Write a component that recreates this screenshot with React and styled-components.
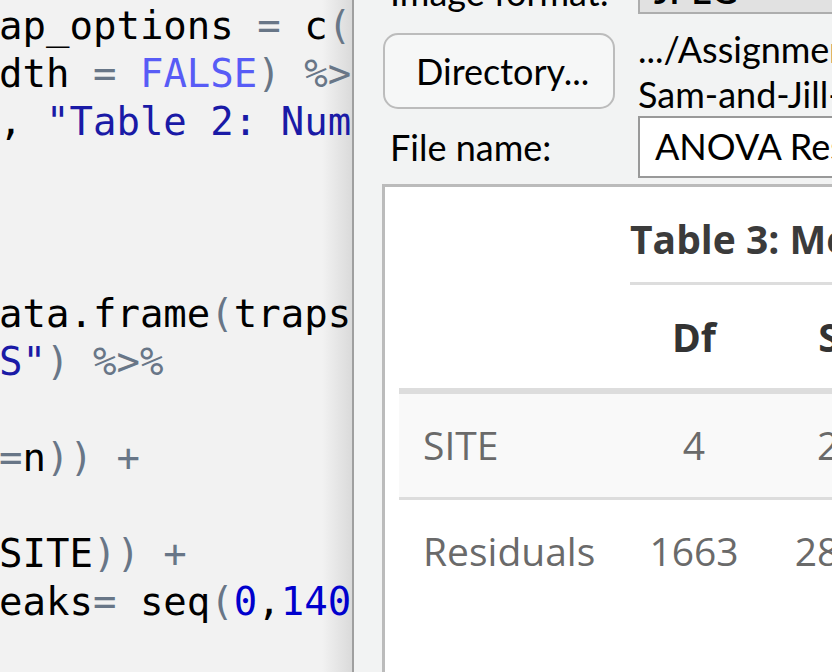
import React from "react";
import styled, { createGlobalStyle } from "styled-components";

const GlobalStyle = createGlobalStyle`
  html, body {
    margin: 0;
    padding: 0;
    width: 832px;
    height: 672px;
    overflow: hidden;
    background: #f2f3f3;
  }
`;

const tokenColors = {
  t: "#000000",
  op: "#687687",
  kw: "#585cf6",
  str: "#1a1aa6",
  num: "#0000cd",
};

const codeLines = [
  [["ap_options", "t"], [" = ", "op"], ["c", "t"], ["(", "op"]],
  [["dth", "t"], [" = ", "op"], ["FALSE", "kw"], [")", "op"], [" %>", "op"]],
  [[",", "t"], [' "Table 2: Num', "str"]],
  [],
  [],
  [],
  [["ata.frame", "t"], ["(", "op"], ["traps", "t"]],
  [['S"', "str"], [")", "op"], [" %>%", "op"]],
  [],
  [["=", "op"], ["n", "t"], ["))", "op"], [" +", "op"]],
  [],
  [["SITE", "t"], ["))", "op"], [" +", "op"]],
  [["eaks", "t"], ["=", "op"], [" seq", "t"], ["(", "op"], ["0", "num"], [",", "t"], ["140", "num"]],
  [],
];

const Screen = styled.div`
  display: flex;
  width: 832px;
  height: 672px;
  overflow: hidden;
`;

const Editor = styled.div`
  flex: none;
  width: 354px;
  height: 672px;
  box-sizing: border-box;
  padding-top: 2px;
  overflow: hidden;
  background: linear-gradient(to right, #f2f2f2 0, #f2f2f2 322px, #dadada 352px);
  border-right: 2px solid #9f9f9f;
  font-family: "DejaVu Sans Mono", "Liberation Mono", monospace;
  font-size: 39px;
  line-height: 48px;
  white-space: pre;
`;

const CodeLine = styled.div`
  height: 48px;
  margin-left: -1px;
`;

const Tok = styled.span`
  color: ${(p) => tokenColors[p.$k]};
`;

const Dialog = styled.div`
  flex: 1;
  min-width: 0;
  display: flex;
  flex-direction: column;
  background: #f2f3f3;
  padding-left: 28px;
  overflow: hidden;
  font-family: "Segoe UI", Lato, "Noto Sans", sans-serif;
  font-size: 36px;
  color: #000;
`;

const Form = styled.div`
  display: grid;
  grid-template-columns: 256px 320px;
  margin-top: -44px;
`;

const Label = styled.div`
  align-self: center;
  padding-left: 8px;
  padding-top: ${(p) => p.$drop || 0}px;
  white-space: nowrap;
`;

const Select = styled.div`
  height: 58px;
  box-sizing: border-box;
  border: 2px solid #adadad;
  background: #e1e1e1;
  padding: 7px 14px 0;
  line-height: 50px;
  font-weight: 600;
  overflow: hidden;
`;

const Button = styled.div`
  align-self: center;
  justify-self: start;
  margin: 12px 0 0 1px;
  width: 232px;
  height: 76px;
  box-sizing: border-box;
  border: 2px solid #bcbcbc;
  border-radius: 15px;
  background: #f6f7f7;
  display: flex;
  align-items: center;
  padding-left: 31px;
  white-space: nowrap;
`;

const PathText = styled.div`
  margin-top: 13px;
  margin-bottom: -1px;
  line-height: 45px;
  white-space: nowrap;
`;

const Input = styled.div`
  height: 62px;
  box-sizing: border-box;
  border: 2px solid #999;
  background: #fff;
  padding-left: 15px;
  line-height: 56px;
  white-space: nowrap;
`;

const Viewer = styled.div`
  flex: 1;
  margin-top: 6px;
  border-top: 3px solid #bbbbbb;
  border-left: 3px solid #bbbbbb;
  background: #fff;
  overflow: hidden;
  padding-left: 14px;
`;

const Table = styled.table`
  border-collapse: collapse;
  table-layout: fixed;
  width: 800px;
  font-family: "Open Sans", "Noto Sans", sans-serif;
  font-size: 39px;
  line-height: 1.42857;
  color: #6a6a6a;
`;

const Col = styled.col`
  width: ${(p) => p.$w}px;
`;

const GroupCell = styled.th`
  padding: 24px 9px 0 9px;
  text-align: left;
  font-weight: 700;
  color: #3b3b3b;
  white-space: nowrap;
`;

const GroupTitle = styled.div`
  border-bottom: 3px solid #dddddd;
  padding-bottom: 15px;
`;

const HeadCell = styled.th`
  padding: 24px 24px 24px;
  text-align: ${(p) => (p.$left ? "left" : "center")};
  font-weight: 700;
  color: #333;
  border-bottom: 6px solid #dddddd;
  white-space: nowrap;
`;

const Row = styled.tr`
  background: ${(p) => (p.$striped ? "#f9f9f9" : "#fff")};
  border-top: ${(p) => (p.$first ? "none" : "3px solid #dddddd")};
`;

const Cell = styled.td`
  padding: 23px 24px 24px;
  text-align: ${(p) => (p.$left ? "left" : "center")};
  white-space: nowrap;
`;

const rows = [
  { term: "SITE", df: "4", sumsq: "2406.93" },
  { term: "Residuals", df: "1663", sumsq: "28101.433" },
];

const App = () => {
  return (
    <>
      <GlobalStyle />
      <Screen>
        <Editor>
          {codeLines.map((line, i) => (
            <CodeLine key={i}>
              {line.map(([text, kind], j) => (
                <Tok key={j} $k={kind}>
                  {text}
                </Tok>
              ))}
            </CodeLine>
          ))}
        </Editor>
        <Dialog>
          <Form>
            <Label $drop={14}>Image format:</Label>
            <Select>JPEG</Select>
            <Button>Directory...</Button>
            <PathText>
              .../Assignments/Assignment 2
              <br />
              Sam-and-Jill-Trapping
            </PathText>
            <Label>File name:</Label>
            <Input>ANOVA Results</Input>
          </Form>
          <Viewer>
            <Table>
              <colgroup>
                <Col $w={222} />
                <Col $w={146} />
                <Col $w={244} />
                <Col $w={188} />
              </colgroup>
              <thead>
                <tr>
                  <th />
                  <GroupCell colSpan={3}>
                    <GroupTitle>Table 3: Mean Number of Individuals</GroupTitle>
                  </GroupCell>
                </tr>
                <tr>
                  <HeadCell $left />
                  <HeadCell>Df</HeadCell>
                  <HeadCell>Sum Sq</HeadCell>
                  <HeadCell>Mean Sq</HeadCell>
                </tr>
              </thead>
              <tbody>
                {rows.map((r, i) => (
                  <Row key={r.term} $striped={i === 0} $first={i === 0}>
                    <Cell $left>{r.term}</Cell>
                    <Cell>{r.df}</Cell>
                    <Cell>{r.sumsq}</Cell>
                    <Cell />
                  </Row>
                ))}
              </tbody>
            </Table>
          </Viewer>
        </Dialog>
      </Screen>
    </>
  );
};

export default App;
